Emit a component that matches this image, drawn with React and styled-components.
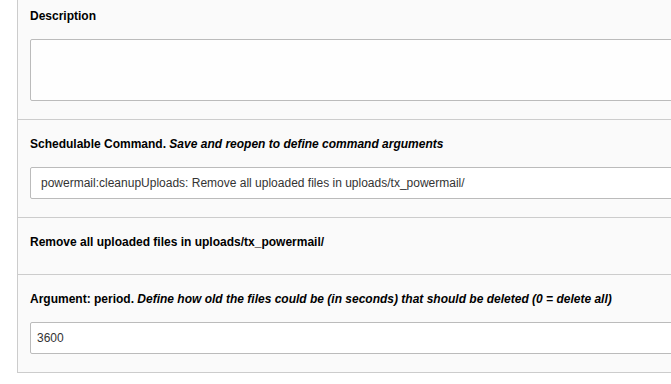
import styled, {createGlobalStyle} from 'styled-components';

const Global = createGlobalStyle`
  html, body {
    margin: 0;
    padding: 0;
    background: #fff;
    overflow: hidden;
  }
  body {
    font-family: "Liberation Sans", Arial, sans-serif;
    font-size: 12px;
    color: #000;
  }
`;

const Page = styled.div`
  padding-left: 17px;
  width: 800px;
`;

const Panel = styled.div`
  background: #fafafa;
  border-left: 1px solid #cccccc;
  border-bottom: 1px solid #cccccc;
`;

const Section = styled.div`
  padding: ${props => props.first ? 7 : 15}px 130px 18px 12px;
  border-top: ${props => props.first ? 'none' : '1px solid #cccccc'};
`;

const Label = styled.div`
  font-weight: bold;
  line-height: 18px;
  margin-bottom: ${props => props.bare ? 5 : 14}px;

  em {
    font-style: italic;
  }
`;

const TextArea = styled.textarea`
  display: block;
  box-sizing: border-box;
  width: 100%;
  height: 62px;
  margin: 0;
  border: 1px solid #bbbbbb;
  border-radius: 2px;
  background: #fefefe;
  resize: none;
  outline: none;
`;

const SelectBox = styled.div`
  box-sizing: border-box;
  height: 32px;
  line-height: 30px;
  padding-left: 10px;
  border: 1px solid #bbbbbb;
  border-radius: 2px;
  background: #fff;
  color: #333;
  font-size: 12px;
  white-space: nowrap;
`;

const TextInput = styled.input`
  display: block;
  box-sizing: border-box;
  width: 100%;
  height: 32px;
  margin: 0;
  padding: 0 6px;
  border: 1px solid #bbbbbb;
  border-radius: 2px;
  background: #fff;
  color: #333;
  font-family: "Liberation Sans", Arial, sans-serif;
  font-size: 12px;
  outline: none;
`;

export default function App() {
  return (
    <Page>
      <Global />
      <Panel>
        <Section first>
          <Label>Description</Label>
          <TextArea />
        </Section>
        <Section>
          <Label>Schedulable Command. <em>Save and reopen to define command arguments</em></Label>
          <SelectBox>powermail:cleanupUploads: Remove all uploaded files in uploads/tx_powermail/</SelectBox>
        </Section>
        <Section>
          <Label bare>Remove all uploaded files in uploads/tx_powermail/</Label>
        </Section>
        <Section>
          <Label>Argument: period. <em>Define how old the files could be (in seconds) that should be deleted (0 = delete all)</em></Label>
          <TextInput defaultValue="3600" />
        </Section>
      </Panel>
    </Page>
  );
}
